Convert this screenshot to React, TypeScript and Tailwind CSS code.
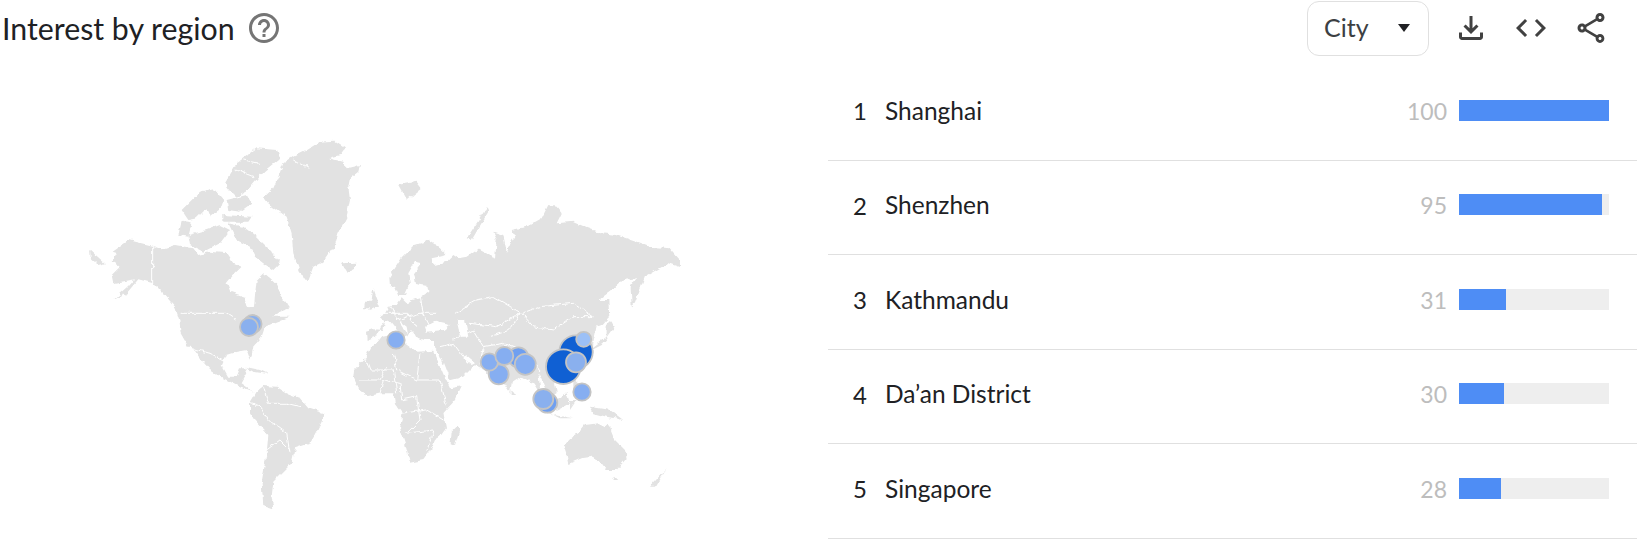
import React from "react";

const font = { fontFamily: "Lato, 'Open Sans', sans-serif" };

const rows = [
  { rank: 1, name: "Shanghai", value: 100 },
  { rank: 2, name: "Shenzhen", value: 95 },
  { rank: 3, name: "Kathmandu", value: 31 },
  { rank: 4, name: "Da’an District", value: 30 },
  { rank: 5, name: "Singapore", value: 28 },
];

function Icon({ d, className }: { d: string; className?: string }) {
  return (
    <svg viewBox="0 0 24 24" className={className} fill="currentColor">
      <path d={d} />
    </svg>
  );
}

// zoomed-crop coordinates, scaled back by the group transforms below
const americas = [
  "612,232 640,205 655,170 670,130 700,110 740,90 775,68 825,65 855,85 840,105 805,115 850,125 860,145 900,135 895,155 870,175 865,200 870,240 860,290 835,340 825,375 790,425 760,440 745,480 728,478 715,440 700,400 695,340 680,290 640,262 625,250",
  "495,190 530,130 590,85 650,90 660,115 610,155 580,190 560,215 530,230 510,210",
  "505,310 550,320 590,350 630,390 660,430 640,450 610,430 585,410 570,380 530,360",
  "385,345 440,330 480,315 510,330 480,370 430,395 390,375",
  "355,345 365,305 395,310 385,350",
  "365,270 420,215 460,205 490,240 480,270 450,290 440,265 410,295 385,300",
  "490,285 575,290 565,305 490,305",
  "500,240 560,225 575,250 540,275 505,270",
  "155,395 205,360 278,378 305,388 345,375 400,385 415,405 450,395 500,400 520,430 545,440 520,465 500,490 510,515 555,530 565,565 582,560 585,525 590,480 610,460 645,490 665,530 690,565 660,575 640,590 690,590 650,605 615,620 605,650 580,680 572,722 560,690 530,695 498,705 485,735 505,770 530,770 540,745 555,745 562,760 545,790 560,800 585,815 570,810 540,800 490,775 450,750 420,715 395,680 385,680 362,640 358,600 345,560 310,520 280,490 235,478 200,520 160,540 205,500 225,478 160,490 155,465 180,440 155,425 170,400",
  "570,850 590,815 610,798 650,800 680,820 720,835 745,865 790,880 785,905 765,945 750,970 705,985 695,1030 665,1060 640,1085 635,1130 640,1165 610,1155 605,1090 620,1000 625,945 585,900 570,875",
  "555,740 600,750 625,762 580,755",
  "845,430 890,428 880,450 860,455",
  "90,390 135,430 115,435 92,415",
  "940,505 960,560 925,570 935,540",
  "915,545 935,545 930,565 912,565",
];

const eurasia = [
  "80,480 78,455 100,448 130,450 135,425 118,410 135,400 150,375 170,375 185,355 200,370 215,360 245,350 265,335 262,318 228,312 222,280 245,250 225,245 205,280 210,310 195,345 175,345 165,320 150,322 148,290 185,235 225,195 265,182 300,205 320,225 275,235 280,255 320,245 340,225 355,235 380,230 415,205 455,225 465,240 470,175 460,155 490,165 500,215 510,190 525,165 515,150 560,140 605,115 625,75 650,80 665,100 650,130 700,125 745,145 785,160 830,165 890,185 930,200 990,205 1020,240 1020,262 985,250 950,270 915,290 885,370 875,380 872,320 890,295 850,300 810,335 775,360 805,360 808,410 785,435 770,440 760,490 758,520 720,570 680,600 645,605 650,640 630,650 615,625 605,600 595,580 600,620 618,660 628,690 605,665 590,625 580,610 545,590 530,600 515,610 510,640 490,610 478,590 445,585 425,565 405,555 370,590 335,600 325,590 298,520 285,505 285,480 250,480 225,470 215,450 205,470 200,440 175,420 205,465 190,470 150,420 130,430 105,470",
  "40,590 42,570 75,535 90,505 110,490 125,470 150,465 195,490 230,515 280,512 318,600 330,625 365,618 345,660 310,700 318,745 300,770 285,780 270,815 250,840 210,848 195,790 180,745 188,700 165,670 160,640 120,640 85,648 55,625",
  "355,735 360,745 345,795 332,790 335,755",
  "380,175 440,85 445,95 395,180",
  "175,15 230,5 245,25 200,60",
  "760,500 800,470 800,430 810,420 825,440 790,490 750,510",
  "670,795 690,775 715,760 735,735 775,730 790,745 805,730 825,780 855,810 860,835 830,870 800,870 785,850 755,830 725,835 685,852 678,820",
  "825,890 835,900 820,900",
  "930,920 980,865 960,895 945,920",
  "590,655 640,710 625,700 590,670",
  "640,705 700,715 660,715",
  "640,660 680,640 690,670 650,690",
  "690,660 710,660 690,690",
  "700,590 720,610 720,650 700,630",
  "750,680 810,690 850,720 800,710 760,700",
  "515,630 525,645 515,645",
  "15,255 50,250 35,272",
];

const waters = [
  "350,420 375,420 385,470 360,470 355,440",
  "255,440 285,425 330,435 310,450 260,455",
  "375,525 405,550 395,555 370,535",
];

const borders = [
  "545,400 600,380 700,370 760,410 700,410 640,450 580,440 545,400",
  "345,400 410,360 460,350 545,400",
  "390,430 470,440 540,400 510,450 450,470",
  "340,480 400,450 430,500 420,550",
  "430,500 490,490 560,520 600,570",
  "75,530 90,570 160,570 170,640",
  "160,520 170,570 230,600 240,520",
  "230,600 300,600 320,680",
  "185,700 260,690 310,720",
  "200,760 280,750 260,815",
  "150,370 170,420 240,400 290,400",
  "240,345 250,400 270,440",
  "300,500 340,490 370,530",
  "120,640 130,600 180,610 185,660 230,650",
  "230,650 240,720 200,760",
  "110,400 200,400 230,440",
  "60,600 120,600 140,560",
];

const americaBorders = [
  "278,378 278,490",
  "362,580 500,580 530,600",
  "395,685 450,700 490,720",
  "610,800 625,850 680,850 720,860",
  "625,900 680,940 690,1000",
  "620,990 660,960 690,990",
  "570,850 600,860 625,900",
  "700,120 745,145",
  "835,345 862,325",
  "530,150 580,170",
  "550,120 600,130",
];

const bubbles = [
  { x: 252.6, y: 324, r: 9, fill: "#8ab0ee" },
  { x: 249, y: 327, r: 9, fill: "#8ab0ee" },
  { x: 396, y: 340, r: 8.7, fill: "#86aef1" },
  { x: 518.3, y: 357.3, r: 10, fill: "#6f9ff0" },
  { x: 498.7, y: 374.3, r: 10, fill: "#86aef1" },
  { x: 489.3, y: 362, r: 8.7, fill: "#86aef1" },
  { x: 504.3, y: 356, r: 9, fill: "#86aef1" },
  { x: 525.3, y: 364.3, r: 10.5, fill: "#86aef1" },
  { x: 576, y: 352, r: 16.7, fill: "#1060d3" },
  { x: 563.3, y: 366.7, r: 17.3, fill: "#1060d3" },
  { x: 576, y: 362.3, r: 10, fill: "#8ab0ee" },
  { x: 583.7, y: 339.3, r: 7.5, fill: "#9cc0f6" },
  { x: 547.3, y: 402.7, r: 10, fill: "#6f9ff0" },
  { x: 543.3, y: 399, r: 10, fill: "#8ab0ee" },
  { x: 582, y: 392, r: 8.7, fill: "#86aef1" },
];

function WorldMap() {
  return (
    <svg viewBox="0 66 828 478" className="h-[478px] w-[828px] shrink-0">
      <defs>
        <filter id="coast" x="0" y="66" width="828" height="478" filterUnits="userSpaceOnUse">
          <feTurbulence type="fractalNoise" baseFrequency="0.16" numOctaves="2" seed="4" />
          <feDisplacementMap in="SourceGraphic" scale="5" xChannelSelector="R" yChannelSelector="G" />
          <feGaussianBlur stdDeviation="0.35" />
        </filter>
      </defs>
      <g filter="url(#coast)">
        <g transform="translate(60 120) scale(0.3333)" fill="#e2e2e2">
          {americas.map((p) => (
            <polygon key={p} points={p} />
          ))}
          {americaBorders.map((p) => (
            <polyline key={p} points={p} fill="none" stroke="#fff" strokeWidth="3" />
          ))}
        </g>
        <g transform="translate(340 180) scale(0.3333)" fill="#e2e2e2">
          {eurasia.map((p) => (
            <polygon key={p} points={p} />
          ))}
          {waters.map((p) => (
            <polygon key={p} points={p} fill="#fff" />
          ))}
          {borders.map((p) => (
            <polyline key={p} points={p} fill="none" stroke="#fff" strokeWidth="3" />
          ))}
        </g>
      </g>
      {bubbles.map((b) => (
        <circle key={`${b.x}-${b.y}`} cx={b.x} cy={b.y} r={b.r} fill={b.fill} stroke="#c4c4c4" strokeWidth="1.8" />
      ))}
    </svg>
  );
}

export default function App() {
  return (
    <div className="h-[544px] w-[1637px] overflow-hidden bg-white" style={font}>
      <header className="flex h-[66px] items-start justify-between pl-[2px] pr-[28px]">
        <div className="flex h-[56px] items-center text-[#202124]">
          <h2 className="text-[30.3px] leading-none">Interest by region</h2>
          <Icon
            className="ml-[11px] h-9 w-9 text-[#757575]"
            d="M11 18h2v-2h-2v2zm1-16C6.48 2 2 6.48 2 12s4.48 10 10 10 10-4.48 10-10S17.52 2 12 2zm0 18c-4.41 0-8-3.59-8-8s3.59-8 8-8 8 3.59 8 8-3.59 8-8 8zm0-14c-2.21 0-4 1.79-4 4h2c0-1.1.9-2 2-2s2 .9 2 2c0 2-3 1.75-3 5h2c0-2.25 3-2.5 3-5 0-2.21-1.79-4-4-4z"
          />
        </div>
        <div className="flex h-[56px] items-center text-[#414141]">
          <div className="mr-[24px] flex h-[55px] w-[122px] items-center justify-between rounded-[12px] border border-[#e0e0e0] pl-[16px] pr-[18px]">
            <span className="text-[25px] text-[#3c4043]">City</span>
            <span className="h-0 w-0 border-x-[6px] border-t-[8px] border-x-transparent border-t-[#202124]" />
          </div>
          <div className="flex items-center gap-[24px]">
            <Icon className="h-9 w-9" d="M18 15v3H6v-3H4v3c0 1.1.9 2 2 2h12c1.1 0 2-.9 2-2v-3h-2zm-1-4l-1.41-1.41L13 12.17V4h-2v8.17L8.41 9.59 7 11l5 5 5-5z" />
            <Icon className="h-9 w-9" d="M9.4 16.6L4.8 12l4.6-4.6L8 6l-6 6 6 6 1.4-1.4zm5.2 0l4.6-4.6-4.6-4.6L16 6l6 6-6 6-1.4-1.4z" />
            <Icon className="h-9 w-9" d="M18 16.08c-.76 0-1.44.3-1.96.77L8.91 12.7c.05-.23.09-.46.09-.7s-.04-.47-.09-.7l7.05-4.11c.54.5 1.25.81 2.04.81 1.66 0 3-1.34 3-3s-1.34-3-3-3-3 1.34-3 3c0 .24.04.47.09.7L8.04 9.81C7.5 9.31 6.79 9 6 9c-1.66 0-3 1.34-3 3s1.34 3 3 3c.79 0 1.5-.31 2.04-.81l7.12 4.16c-.05.21-.08.43-.08.65 0 1.61 1.31 2.92 2.92 2.92s2.92-1.31 2.92-2.92-1.31-2.92-2.92-2.92zM18 4c.55 0 1 .45 1 1s-.45 1-1 1-1-.45-1-1 .45-1 1-1zM6 13c-.55 0-1-.45-1-1s.45-1 1-1 1 .45 1 1-.45 1-1 1zm12 7.02c-.55 0-1-.45-1-1s.45-1 1-1 1 .45 1 1-.45 1-1 1z" />
          </div>
        </div>
      </header>
      <main className="flex">
        <WorldMap />
        <ul className="flex-1">
          {rows.map((row) => (
            <li
              key={row.rank}
              className="flex h-[94.5px] items-center border-b border-[#e0e0e0] pb-[5.5px] pl-[25px] pr-[28px]"
            >
              <span className="mt-[2px] w-[32px] text-[24px] leading-none text-[#202124]">{row.rank}</span>
              <span className="mt-[2px] flex-1 text-[24.5px] leading-none text-[#202124]">{row.name}</span>
              <span className="mt-[2px] mr-[12px] text-[23px] leading-none text-[#bdbdbd]">{row.value}</span>
              <div className="h-[21px] w-[150px] bg-[#eeeeee]">
                <div className="h-full bg-[#4e8df5]" style={{ width: `${row.value}%` }} />
              </div>
            </li>
          ))}
        </ul>
      </main>
    </div>
  );
}
